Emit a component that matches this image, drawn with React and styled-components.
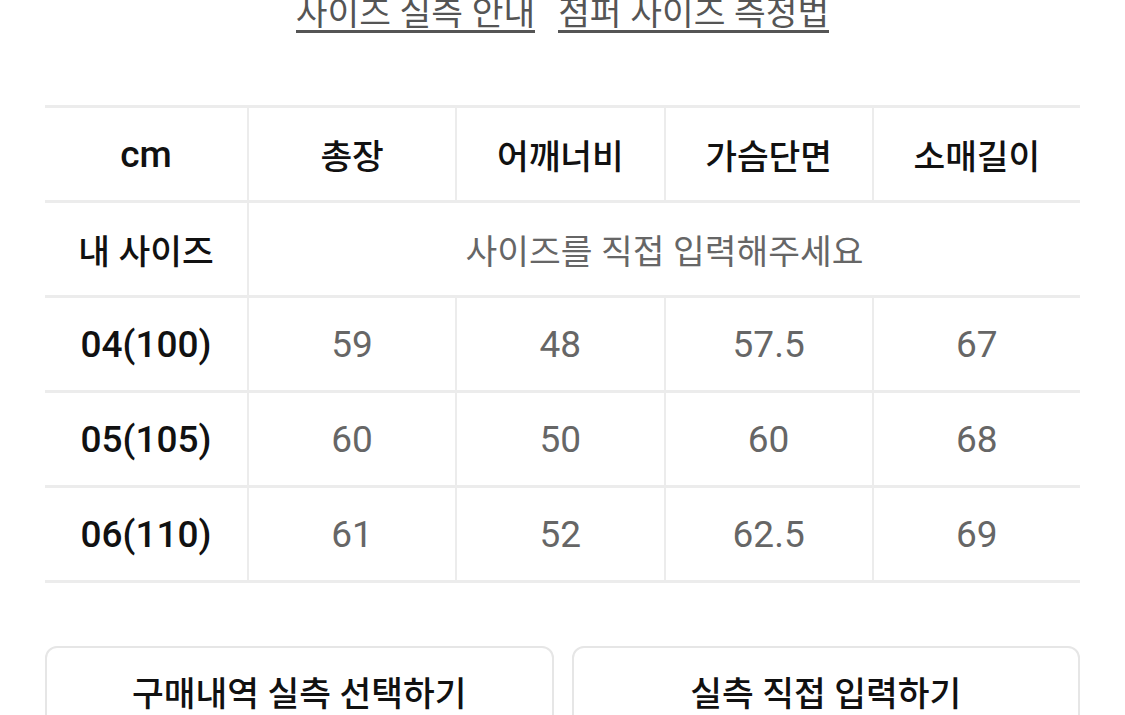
import React from "react";
import styled, { createGlobalStyle } from "styled-components";

const GlobalStyle = createGlobalStyle`
  html, body {
    margin: 0;
    padding: 0;
    background: #fff;
  }
  body {
    font-family: Roboto, "Noto Sans CJK KR", sans-serif;
    color: #111;
  }
`;

// 페이지
const Page = styled.div`
  padding: 0 45px;
  overflow: hidden;
  height: 715px;
  box-sizing: border-box;
`;

// 상단 링크
const Links = styled.div`
  display: flex;
  justify-content: center;
  gap: 23px;
  margin-top: -3px;
`;

const LinkText = styled.a`
  display: inline-block;
  font-size: 34.5px;
  line-height: 33px;
  color: #555;
  text-decoration: none;
  border-bottom: 3px solid #555;
  cursor: pointer;
`;

// 사이즈 표
const Table = styled.div`
  display: grid;
  grid-template-columns: 202px repeat(4, 1fr);
  grid-auto-rows: 92px;
  column-gap: 2px;
  row-gap: 3px;
  padding: 3px 0;
  margin-top: 72px;
  background: #ececec;
`;

const Cell = styled.div`
  display: flex;
  align-items: center;
  justify-content: center;
  background: #fff;
  grid-column: ${(p) => (p.$span ? `span ${p.$span}` : "auto")};
  font-size: ${(p) => (p.$num ? "37px" : "34.5px")};
  font-weight: ${(p) => (p.$bold ? 500 : 400)};
  color: ${(p) => (p.$muted ? "#666" : "#111")};
`;

// 하단 버튼
const ButtonRow = styled.div`
  display: flex;
  gap: 18px;
  margin-top: 63px;
`;

const Button = styled.button`
  flex: 1;
  height: 94px;
  padding: 0 0 4px;
  background: #fff;
  border: 2px solid #e6e6e6;
  border-radius: 12px;
  font-family: Roboto, "Noto Sans CJK KR", sans-serif;
  font-size: 34.5px;
  font-weight: 500;
  color: #111;
  cursor: pointer;
`;

const headers = ["총장", "어깨너비", "가슴단면", "소매길이"];

const rows = [
  { size: "04(100)", values: ["59", "48", "57.5", "67"] },
  { size: "05(105)", values: ["60", "50", "60", "68"] },
  { size: "06(110)", values: ["61", "52", "62.5", "69"] },
];

export default function App() {
  return (
    <>
      <GlobalStyle />
      <Page>
        <Links>
          <LinkText>사이즈 실측 안내</LinkText>
          <LinkText>점퍼 사이즈 측정법</LinkText>
        </Links>
        <Table>
          <Cell $num $bold>cm</Cell>
          {headers.map((h) => (
            <Cell key={h} $bold>{h}</Cell>
          ))}
          <Cell $bold>내 사이즈</Cell>
          <Cell $span={4} $muted>사이즈를 직접 입력해주세요</Cell>
          {rows.map((r) => (
            <React.Fragment key={r.size}>
              <Cell $num $bold>{r.size}</Cell>
              {r.values.map((v, i) => (
                <Cell key={i} $num $muted>{v}</Cell>
              ))}
            </React.Fragment>
          ))}
        </Table>
        <ButtonRow>
          <Button>구매내역 실측 선택하기</Button>
          <Button>실측 직접 입력하기</Button>
        </ButtonRow>
      </Page>
    </>
  );
}
